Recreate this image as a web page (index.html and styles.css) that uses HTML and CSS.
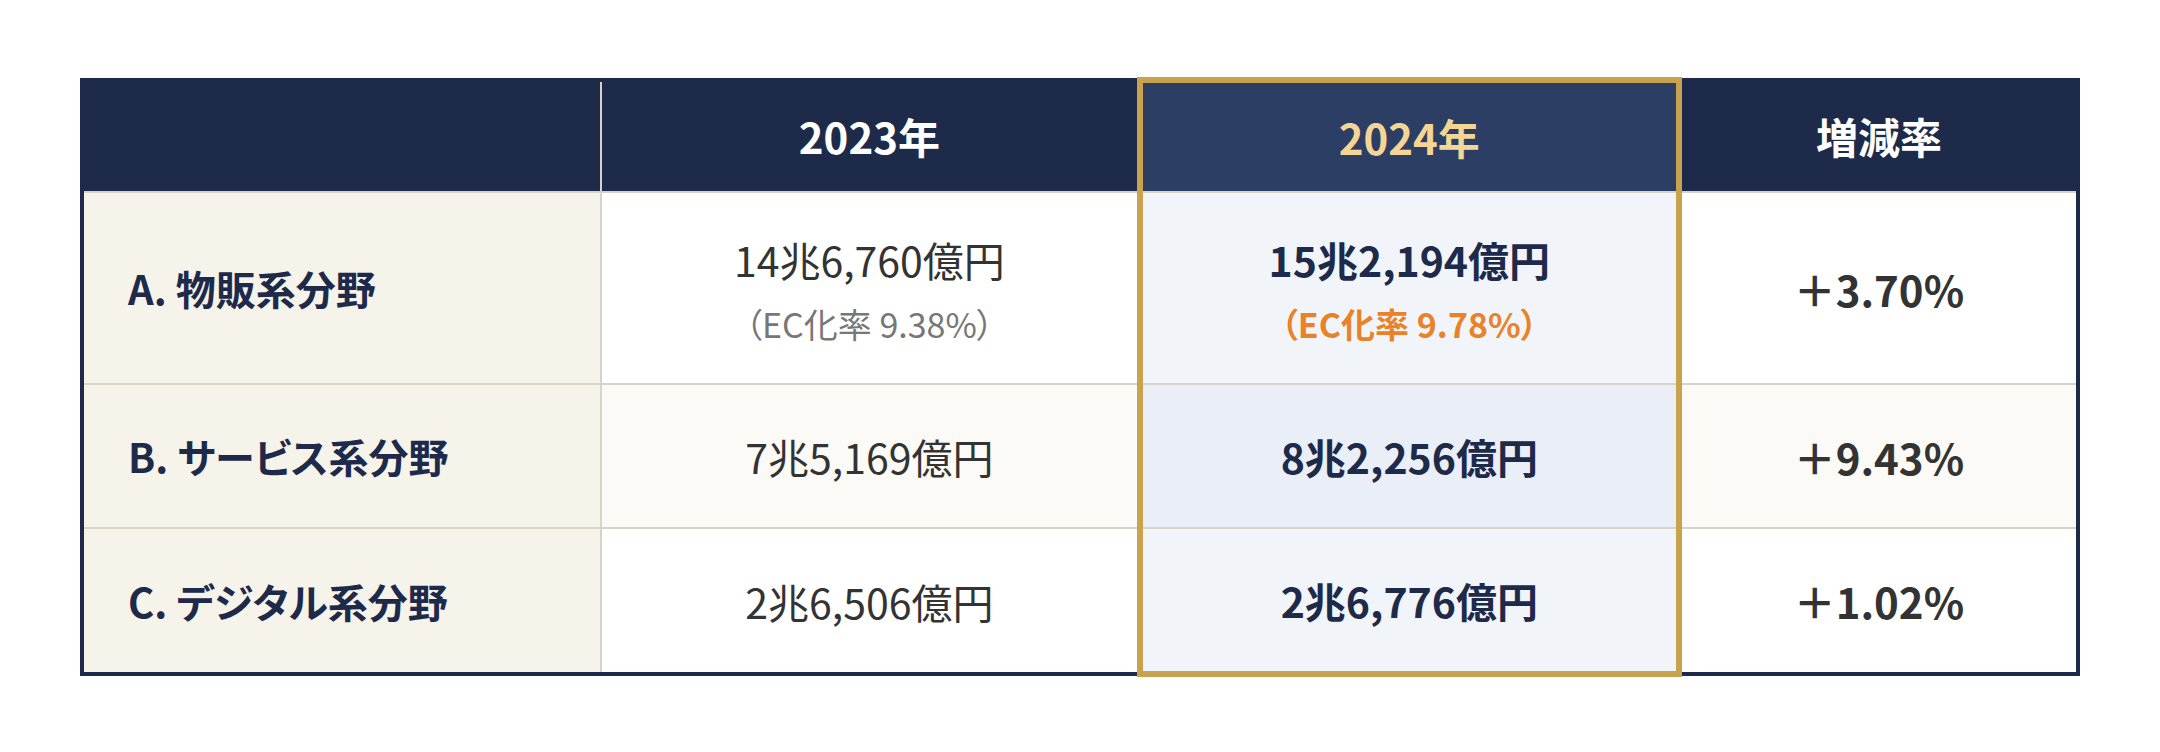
FILE: index.html
```html
<!DOCTYPE html>
<html lang="ja">
<head>
<meta charset="utf-8">
<title>EC市場規模 比較表</title>
<link rel="stylesheet" href="styles.css">
</head>
<body>
<table class="cmp">
  <colgroup>
    <col class="c-label">
    <col class="c-year">
    <col class="c-year">
    <col class="c-rate">
  </colgroup>
  <thead>
    <tr class="head">
      <th class="corner"></th>
      <th>2023年</th>
      <th class="hl">2024年</th>
      <th>増減率</th>
    </tr>
  </thead>
  <tbody>
    <tr class="row row-tall">
      <th class="label">A. 物販系分野</th>
      <td class="val">
        <div class="num">14兆6,760億円</div>
        <div class="sub">（EC化率 9.38%）</div>
      </td>
      <td class="val hl">
        <div class="num">15兆2,194億円</div>
        <div class="sub sub-hl">（EC化率 9.78%）</div>
      </td>
      <td class="rate">＋3.70%</td>
    </tr>
    <tr class="row row-alt">
      <th class="label">B. サービス系分野</th>
      <td class="val"><div class="num">7兆5,169億円</div></td>
      <td class="val hl"><div class="num">8兆2,256億円</div></td>
      <td class="rate">＋9.43%</td>
    </tr>
    <tr class="row">
      <th class="label">C. デジタル系分野</th>
      <td class="val"><div class="num">2兆6,506億円</div></td>
      <td class="val hl last"><div class="num">2兆6,776億円</div></td>
      <td class="rate">＋1.02%</td>
    </tr>
  </tbody>
</table>
</body>
</html>
```

FILE: styles.css
```css
html, body {
  margin: 0;
  padding: 0;
  background: #ffffff;
}

body {
  font-family: "Noto Sans CJK JP", "Noto Sans", sans-serif;
}

.cmp {
  border-collapse: collapse;
  table-layout: fixed;
  width: 2000px;
  margin: 77px auto 0;
  border: 4px solid #1e2a4a;
  font-feature-settings: "palt";
}

.c-label { width: 26%; }
.c-year { width: 27%; }
.c-rate { width: 20%; }

.cmp th,
.cmp td {
  padding: 0;
  text-align: center;
  vertical-align: middle;
}

/* header */
.head th {
  height: 108px;
  background: #1e2a4a;
  color: #ffffff;
  font-size: 42px;
  font-weight: 700;
  line-height: 1.2;
}

.head th.corner {
  border-right: 2px solid #d9d3c7;
}

.head th.hl {
  background: #2d3e64;
  color: #f4d595;
  border-top: 6px solid #c9a24f;
}

/* body */
.row th,
.row td {
  height: 142px;
  border-top: 2px solid #d9d3c7;
  border-left: 2px solid #d9d3c7;
  background: #ffffff;
}

.row-tall th,
.row-tall td {
  height: 183px;
}

.row-alt td {
  background: #fbfaf6;
}

.row .label {
  text-align: left;
  padding-left: 44px;
  background: #f6f3eb;
  color: #1e2a4a;
  font-size: 40px;
  font-weight: 700;
}

.hl {
  border-left: 6px solid #c9a24f !important;
  border-right: 6px solid #c9a24f !important;
}

.row td.hl {
  background: #f1f5fa;
}

.row-alt td.hl {
  background: #e9eef7;
}

.row td.last {
  border-bottom: 6px solid #c9a24f;
}

.row-tall .val {
  padding-top: 7px;
}

.num {
  font-size: 41px;
  font-weight: 400;
  color: #333333;
  line-height: 60px;
}

.hl .num {
  font-weight: 700;
  color: #1e2a4a;
}

.sub {
  margin-top: 5px;
  font-size: 34px;
  font-weight: 400;
  color: #777777;
  line-height: 60px;
}

.sub.sub-hl {
  color: #e8832a;
  font-weight: 700;
}

.rate {
  font-size: 42px;
  font-weight: 700;
  color: #333333;
}
```
